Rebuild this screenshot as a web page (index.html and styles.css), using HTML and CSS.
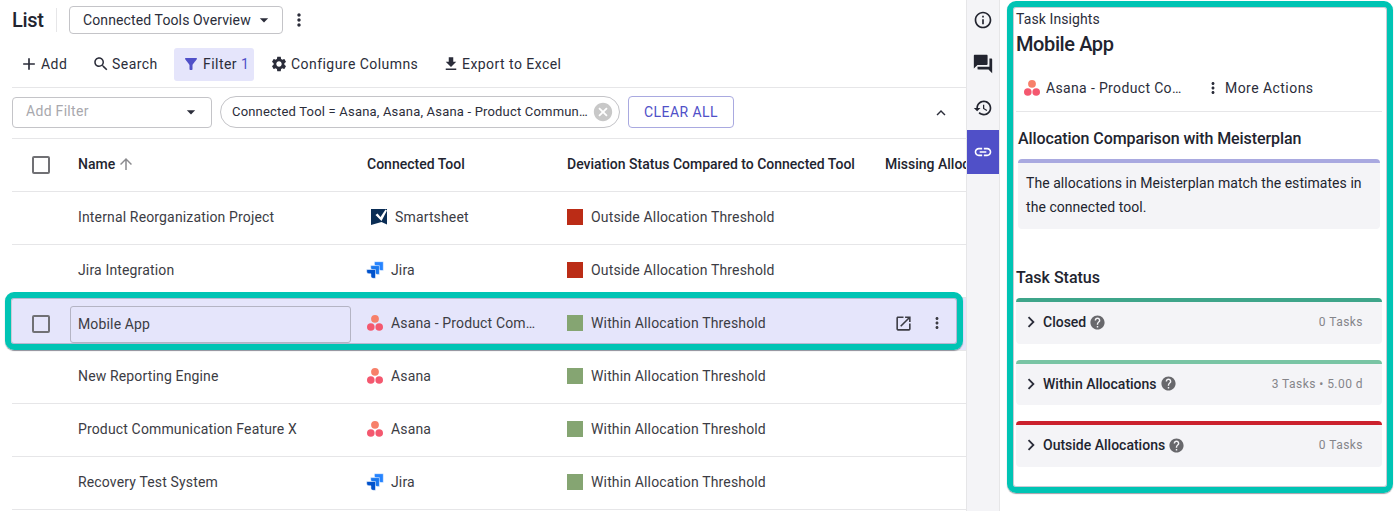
FILE: index.html
```html
<!DOCTYPE html>
<html lang="en">
<head>
<meta charset="utf-8">
<title>List</title>
<link rel="stylesheet" href="styles.css">
</head>
<body>
<svg class="sprite" xmlns="http://www.w3.org/2000/svg">
  <symbol id="i-more" viewBox="0 0 24 24"><path d="M12 8c1.100 0 2-.900 2-2s-.900-2-2-2-2 .900-2 2 .900 2 2 2zm0 2c-1.100 0-2 .900-2 2s.900 2 2 2 2-.900 2-2-.900-2-2-2zm0 6c-1.100 0-2 .900-2 2s.900 2 2 2 2-.900 2-2-.900-2-2-2z"/></symbol>
  <symbol id="i-drop" viewBox="0 0 24 24"><path d="M7 10l5 5 5-5z"/></symbol>
  <symbol id="i-chev" viewBox="0 0 24 24"><path d="M10 6L8.590 7.410 13.170 12l-4.580 4.590L10 18l6-6z"/></symbol>
  <symbol id="i-help" viewBox="0 0 24 24"><path d="M12 2C6.480 2 2 6.480 2 12s4.480 10 10 10 10-4.480 10-10S17.520 2 12 2zm1 17h-2v-2h2v2zm2.070-7.750l-.900.920C13.450 12.900 13 13.500 13 15h-2v-.500c0-1.100.450-2.100 1.170-2.830l1.240-1.260c.370-.360.590-.860.590-1.410 0-1.100-.900-2-2-2s-2 .900-2 2H8c0-2.210 1.790-4 4-4s4 1.790 4 4c0 .880-.360 1.680-.930 2.250z"/></symbol>
  <symbol id="i-asana" viewBox="0 0 18 18"><circle cx="9" cy="4.800" r="3.900" fill="#f7806a"/><circle cx="4.800" cy="13" r="3.800" fill="#f4586f"/><circle cx="13.200" cy="13" r="3.800" fill="#f4586f"/></symbol>
  <symbol id="i-jira" viewBox="0 0 18 18"><path d="M8.400 .7H17.300v8.800h-2.300c-1.200 0-2.300-1-2.300-2.300V5H10.700c-1.300 0-2.300-1-2.300-2.300z" fill="#2684ff" stroke="#fff" stroke-width=".5"/><path d="M4.700 4.600h8.700v8.800h-2.300c-1.200 0-2.300-1-2.300-2.300V8.900H7c-1.300 0-2.300-1-2.300-2.300z" fill="#1a78ef" stroke="#fff" stroke-width=".5"/><path d="M.7 8.500h8.800v8.800H7.200c-1.200 0-2.300-1-2.300-2.300v-2.200H3c-1.300 0-2.300-1-2.300-2.300z" fill="#0052cc" stroke="#fff" stroke-width=".5"/></symbol>
</svg>

<div class="app">
  <main class="main">
    <header class="title-bar">
      <h1 class="page-title">List</h1>
      <span class="title-sep"></span>
      <button class="view-select"><span>Connected Tools Overview</span><svg class="icon icon-20"><use href="#i-drop"/></svg></button>
      <svg class="icon icon-20 more-view"><use href="#i-more"/></svg>
    </header>

    <nav class="toolbar">
      <button class="tool tool-add"><svg class="icon icon-20" viewBox="0 0 24 24"><path d="M19 13h-6v6h-2v-6H5v-2h6V5h2v6h6v2z"/></svg>Add</button>
      <button class="tool tool-search"><svg class="icon icon-18" viewBox="0 0 24 24"><path d="M15.500 14h-.790l-.280-.270C15.410 12.590 16 11.110 16 9.500 16 5.910 13.090 3 9.500 3S3 5.910 3 9.500 5.910 16 9.500 16c1.610 0 3.090-.590 4.230-1.570l.270.280v.790l5 4.990L20.490 19l-4.990-5zm-6 0C7.010 14 5 11.990 5 9.500S7.010 5 9.500 5 14 7.010 14 9.500 11.990 14 9.500 14z"/></svg>Search</button>
      <button class="tool tool-filter"><svg class="icon icon-18 accent" viewBox="0 0 24 24"><path d="M4.250 5.610C6.270 8.200 10 13 10 13v6c0 .550.450 1 1 1h2c.550 0 1-.450 1-1v-6s3.720-4.800 5.740-7.390C20.250 4.950 19.780 4 18.950 4H5.040c-.830 0-1.300.950-.790 1.610z"/></svg><span>Filter <span class="count">1</span></span></button>
      <button class="tool tool-config"><svg class="icon icon-18" viewBox="0 0 24 24"><path d="M19.140 12.940c.040-.300.060-.610.060-.940 0-.320-.020-.640-.070-.940l2.030-1.580c.180-.140.230-.410.120-.610l-1.920-3.320c-.120-.220-.370-.290-.590-.220l-2.390.960c-.500-.380-1.030-.700-1.620-.940l-.360-2.540c-.040-.240-.240-.410-.480-.410h-3.840c-.240 0-.430.170-.470.410l-.360 2.540c-.590.240-1.130.570-1.620.940l-2.390-.960c-.220-.080-.470 0-.590.220L2.740 8.870c-.120.210-.080.470.120.610l2.030 1.580c-.050.300-.090.630-.090.940s.020.640.070.940l-2.030 1.580c-.180.140-.230.410-.120.610l1.920 3.320c.120.220.370.290.590.220l2.390-.960c.500.380 1.030.700 1.620.940l.360 2.540c.050.240.240.410.480.410h3.840c.240 0 .440-.170.470-.410l.360-2.540c.590-.240 1.130-.560 1.620-.940l2.390.960c.220.080.470 0 .590-.220l1.920-3.320c.120-.220.070-.470-.120-.610l-2.010-1.580zM12 15.600c-1.980 0-3.600-1.620-3.600-3.600s1.620-3.600 3.600-3.600 3.600 1.620 3.600 3.600-1.620 3.600-3.600 3.600z"/></svg>Configure Columns</button>
      <button class="tool tool-export"><svg class="icon icon-18" viewBox="0 0 24 24"><path d="M19 9h-4V3H9v6H5l7 7 7-7zM5 18v2h14v-2H5z"/></svg>Export to Excel</button>
    </nav>

    <section class="filter-bar">
      <div class="add-filter"><span>Add Filter</span><svg class="icon icon-20"><use href="#i-drop"/></svg></div>
      <div class="chip"><span class="chip-text">Connected Tool = Asana, Asana, Asana - Product Communication</span><svg class="icon chip-x" viewBox="0 0 24 24"><path d="M12 2C6.470 2 2 6.470 2 12s4.470 10 10 10 10-4.470 10-10S17.530 2 12 2zm5 13.590L15.590 17 12 13.410 8.410 17 7 15.590 10.590 12 7 8.410 8.410 7 12 10.590 15.590 7 17 8.410 13.410 12 17 15.590z"/></svg></div>
      <button class="clear-all">CLEAR ALL</button>
      <svg class="icon icon-18 collapse" viewBox="0 0 24 24"><path d="M12 8l-6 6 1.410 1.410L12 10.830l4.590 4.580L18 14z"/></svg>
    </section>

    <div class="table">
      <div class="row head">
        <div class="cell cell-check"><span class="checkbox"></span></div>
        <div class="cell cell-name">Name<svg class="icon icon-18 sort" viewBox="0 0 24 24"><path d="M4 12l1.410 1.410L11 7.830V20h2V7.830l5.580 5.590L20 12l-8-8-8 8z"/></svg></div>
        <div class="cell">Connected Tool</div>
        <div class="cell">Deviation Status Compared to Connected Tool</div>
        <div class="cell">Missing Allocations</div>
      </div>

      <div class="row">
        <div class="cell cell-check"></div>
        <div class="cell cell-name">Internal Reorganization Project</div>
        <div class="cell cell-tool"><svg class="logo logo-smart" viewBox="0 0 16 16"><path d="M0 0h16v15.500l-5.500-2.500L0 16z" fill="#0a2d55"/><path d="M4.500 6l2-1.500 3 3.500 5-7.500 1.500 1-5.500 10.500z" fill="#fff"/></svg>Smartsheet</div>
        <div class="cell cell-status"><span class="swatch bad"></span>Outside Allocation Threshold</div>
        <div class="cell"></div>
      </div>
      <div class="row">
        <div class="cell cell-check"></div>
        <div class="cell cell-name">Jira Integration</div>
        <div class="cell cell-tool tight"><svg class="logo"><use href="#i-jira"/></svg>Jira</div>
        <div class="cell cell-status"><span class="swatch bad"></span>Outside Allocation Threshold</div>
        <div class="cell"></div>
      </div>
      <div class="row selected">
        <div class="cell cell-check"><span class="checkbox"></span></div>
        <div class="cell cell-name"><span class="name-edit">Mobile App</span></div>
        <div class="cell cell-tool tight"><svg class="logo"><use href="#i-asana"/></svg><span class="clip">Asana - Product Communication</span></div>
        <div class="cell cell-status"><span class="swatch good"></span>Within Allocation Threshold</div>
        <div class="cell cell-actions">
          <svg class="icon icon-19" viewBox="0 0 24 24"><path d="M19 19H5V5h7V3H5c-1.110 0-2 .900-2 2v14c0 1.100.890 2 2 2h14c1.100 0 2-.900 2-2v-7h-2v7zM14 3v2h3.590l-9.830 9.830 1.410 1.410L19 6.410V10h2V3h-7z"/></svg>
          <svg class="icon icon-18"><use href="#i-more"/></svg>
        </div>
      </div>
      <div class="row">
        <div class="cell cell-check"></div>
        <div class="cell cell-name">New Reporting Engine</div>
        <div class="cell cell-tool tight"><svg class="logo"><use href="#i-asana"/></svg>Asana</div>
        <div class="cell cell-status"><span class="swatch good"></span>Within Allocation Threshold</div>
        <div class="cell"></div>
      </div>
      <div class="row">
        <div class="cell cell-check"></div>
        <div class="cell cell-name">Product Communication Feature X</div>
        <div class="cell cell-tool tight"><svg class="logo"><use href="#i-asana"/></svg>Asana</div>
        <div class="cell cell-status"><span class="swatch good"></span>Within Allocation Threshold</div>
        <div class="cell"></div>
      </div>
      <div class="row">
        <div class="cell cell-check"></div>
        <div class="cell cell-name">Recovery Test System</div>
        <div class="cell cell-tool tight"><svg class="logo"><use href="#i-jira"/></svg>Jira</div>
        <div class="cell cell-status"><span class="swatch good"></span>Within Allocation Threshold</div>
        <div class="cell"></div>
      </div>
    </div>
  </main>

  <aside class="rail">
    <button class="rail-item"><svg class="icon icon-20" viewBox="0 0 24 24"><path d="M11 7h2v2h-2zm0 4h2v6h-2zm1-9C6.480 2 2 6.480 2 12s4.480 10 10 10 10-4.480 10-10S17.520 2 12 2zm0 18c-4.410 0-8-3.590-8-8s3.590-8 8-8 8 3.590 8 8-3.590 8-8 8z"/></svg></button>
    <button class="rail-item"><svg class="icon icon-22" viewBox="0 0 24 24"><path d="M21 6h-2v9H6v2c0 .550.450 1 1 1h11l4 4V7c0-.550-.450-1-1-1zm-4 6V3c0-.550-.450-1-1-1H3c-.550 0-1 .450-1 1v14l4-4h10c.550 0 1-.450 1-1z"/></svg></button>
    <button class="rail-item"><svg class="icon icon-20" viewBox="0 0 24 24"><path d="M13 3c-4.970 0-9 4.030-9 9H1l3.890 3.890.070.140L9 12H6c0-3.870 3.130-7 7-7s7 3.130 7 7-3.130 7-7 7c-1.930 0-3.680-.790-4.940-2.060l-1.420 1.420C8.270 19.990 10.510 21 13 21c4.970 0 9-4.030 9-9s-4.030-9-9-9zm-1 5v5l4.280 2.540.720-1.210-3.500-2.080V8H12z"/></svg></button>
    <button class="rail-item active"><svg class="icon icon-20" viewBox="0 0 24 24"><path d="M3.900 12c0-1.710 1.390-3.100 3.100-3.100h4V7H7c-2.760 0-5 2.240-5 5s2.240 5 5 5h4v-1.900H7c-1.710 0-3.100-1.390-3.100-3.100zM8 13h8v-2H8v2zm9-6h-4v1.900h4c1.710 0 3.100 1.390 3.100 3.100s-1.390 3.100-3.100 3.100h-4V17h4c2.760 0 5-2.240 5-5s-2.240-5-5-5z"/></svg></button>
  </aside>

  <section class="insights">
    <div class="eyebrow">Task Insights</div>
    <h2 class="project">Mobile App</h2>
    <div class="actions">
      <span class="action action-tool"><svg class="logo"><use href="#i-asana"/></svg><span class="clip">Asana - Product Communication</span></span>
      <span class="action"><svg class="icon icon-18"><use href="#i-more"/></svg>More Actions</span>
    </div>
    <h3 class="compare-title">Allocation Comparison with Meisterplan</h3>
    <p class="compare-box">The allocations in Meisterplan match the estimates in the connected tool.</p>
    <h3 class="status-title">Task Status</h3>
    <div class="status-card closed">
      <svg class="icon chev"><use href="#i-chev"/></svg><span class="status-label">Closed</span><svg class="icon help"><use href="#i-help"/></svg><span class="status-meta">0 Tasks</span>
    </div>
    <div class="status-card within">
      <svg class="icon chev"><use href="#i-chev"/></svg><span class="status-label">Within Allocations</span><svg class="icon help"><use href="#i-help"/></svg><span class="status-meta">3 Tasks • 5.00 d</span>
    </div>
    <div class="status-card outside">
      <svg class="icon chev"><use href="#i-chev"/></svg><span class="status-label">Outside Allocations</span><svg class="icon help"><use href="#i-help"/></svg><span class="status-meta">0 Tasks</span>
    </div>
  </section>
</div>

<div class="mark mark-row"></div>
<div class="mark mark-panel"></div>
</body>
</html>
```

FILE: styles.css
```css
* { box-sizing: border-box; }
html, body { margin: 0; height: 511px; overflow: hidden; background: #fff; }
body { font-family: Roboto, "Liberation Sans", sans-serif; font-size: 14px; color: #2b2d3a; position: relative; }
button { font: inherit; color: inherit; background: none; border: 0; padding: 0; letter-spacing: inherit; }
h1, h2, h3, p { margin: 0; }
.sprite { display: none; }
.icon { display: block; flex: none; fill: currentColor; }
.icon-16 { width: 16px; height: 16px; }
.icon-18 { width: 18px; height: 18px; }
.icon-19 { width: 19px; height: 19px; }
.icon-20 { width: 20px; height: 20px; }
.icon-22 { width: 22px; height: 22px; }
.logo { display: block; flex: none; width: 18px; height: 18px; }

.app { display: flex; height: 511px; }
.main { width: 966px; flex: none; overflow: hidden; padding-left: 12px; }

.title-bar { display: flex; align-items: center; height: 40px; }
.page-title { font-size: 20px; font-weight: 500; line-height: 40px; width: 44px; letter-spacing: -.3px; color: #22242f; }
.title-sep { width: 1px; height: 24px; background: #e6e6e8; }
.view-select { display: flex; align-items: center; justify-content: space-between; width: 214px; height: 28px; margin-left: 12px; padding: 0 8px 1px 13px; border: 1px solid #c4c4c8; border-radius: 4px; letter-spacing: .12px; white-space: nowrap; }
.more-view { margin-left: 6px; }

.toolbar { display: flex; align-items: center; height: 33px; margin-top: 8px; letter-spacing: .45px; }
.tool { display: flex; align-items: center; height: 33px; padding-bottom: 1px; border-radius: 3px; white-space: nowrap; }
.tool-add { padding-left: 7px; gap: 2px; width: 69px; }
.tool-search { width: 93px; padding-left: 11px; gap: 2px; }
.tool-filter { width: 80px; padding-left: 8px; gap: 3px; background: #e5e5fb; }
.tool-filter .count { color: #5050c8; }
.accent { fill: #5050c8; }
.tool-config { margin-left: 16px; gap: 3px; width: 172px; }
.tool-export { gap: 2px; }

.filter-bar { display: flex; align-items: center; height: 52px; margin-top: 6px; padding-bottom: 2px; border-top: 1px solid #e6e6e8; border-bottom: 1px solid #e6e6e8; position: relative; }
.add-filter { display: flex; align-items: center; justify-content: space-between; width: 200px; height: 31px; padding: 0 10px 2px 13px; border: 1px solid #c4c4c8; border-radius: 4px; color: #a8a8ad; letter-spacing: .3px; }
.add-filter .icon { color: #2b2d3a; margin-top: 2px; }
.chip { display: flex; align-items: center; width: 400px; height: 32px; margin-left: 8px; padding: 0 5px 0 11px; border: 1px solid #c4c4c8; border-radius: 16px; font-size: 13px; letter-spacing: .19px; }
.chip-text { flex: 1; min-width: 0; padding-bottom: 2px; overflow: hidden; white-space: nowrap; text-overflow: ellipsis; }
.chip-x { width: 22px; height: 22px; fill: #c8c8c8; margin-left: 2px; }
.clear-all { width: 106px; height: 32px; margin-left: 8px; border: 1px solid #a9a9e0; border-radius: 4px; color: #5050c8; letter-spacing: .45px; }
.collapse { margin-left: auto; margin-right: 16px; margin-top: 2px; }

.row { display: grid; grid-template-columns: 58px 289px 200px 318px 1fr; height: 53px; border-bottom: 1px solid #e6e6e8; color: #3c3c44; letter-spacing: .15px; }
.row.head { color: #22242f; font-weight: 500; letter-spacing: 0; }
.cell { display: flex; align-items: center; padding-left: 8px; padding-bottom: 2px; white-space: nowrap; min-width: 0; }
.cell-check { padding-left: 20px; padding-bottom: 0; }
.checkbox { display: block; width: 18px; height: 18px; border: 2px solid #707074; border-radius: 2px; }
.sort { color: #8a8a8e; margin-left: 2px; }
.cell-tool { gap: 8px; padding-left: 12px; }
.cell-tool.tight { padding-left: 7px; gap: 7px; }
.logo-smart { width: 16px; height: 16px; }
.clip { overflow: hidden; text-overflow: ellipsis; white-space: nowrap; min-width: 0; }
.cell-tool .clip { width: 146px; }
.swatch { width: 16px; height: 16px; margin-right: 8px; flex: none; }
.swatch.bad { background: #bb2c16; }
.swatch.good { background: #85a572; }
.selected { background: #e5e5fb; }
.selected .cell-name { padding-bottom: 0; }
.name-edit { display: flex; align-items: center; width: 281px; height: 37px; margin-left: -8px; padding-left: 7px; border: 1px solid #b4b4c4; border-radius: 3px; }
.cell-actions { gap: 15px; padding-left: 17px; }

.rail { width: 34px; flex: none; margin-top: -2px; background: #f4f4f7; border-left: 1px solid #e6e6e8; border-right: 1px solid #e6e6e8; }
.rail-item { display: flex; align-items: center; justify-content: center; width: 100%; height: 44px; color: #22242f; }
.rail-item.active { background: #5050c8; color: #fff; }

.insights { flex: 1; min-width: 0; padding: 10px 14px 0 16px; }
.eyebrow { line-height: 18px; letter-spacing: .1px; }
.project { font-size: 20px; font-weight: 500; line-height: 24px; margin-top: 4px; letter-spacing: -.4px; color: #22242f; }
.actions { display: flex; align-items: center; height: 46px; margin-top: 10px; padding-bottom: 2px; border-bottom: 1px solid #e6e6e8; letter-spacing: .45px; }
.action { display: flex; align-items: center; gap: 3px; white-space: nowrap; }
.action-tool { width: 188px; gap: 5px; padding-left: 7px; letter-spacing: .35px; }
.action-tool .clip { width: 137px; }
.compare-title { font-size: 16px; font-weight: 500; line-height: 20px; margin: 17px 0 0 2px; letter-spacing: -.08px; color: #22242f; }
.compare-box { margin: 10px 2px 0 2px; height: 70px; padding: 8px 8px 0; background: #f4f4f7; border-top: 4px solid #a9a9e0; border-radius: 4px; line-height: 24px; letter-spacing: .05px; color: #22242f; }
.status-title { font-size: 16px; font-weight: 500; line-height: 20px; margin-top: 39px; color: #22242f; }
.status-card { display: flex; align-items: center; height: 46px; margin-top: 16px; padding: 0 19px 2px 4px; background: #f4f4f7; border-top: 4px solid; border-radius: 4px; }
.status-title + .status-card { margin-top: 10px; }
.status-card.closed { border-top-color: #3ea58a; }
.status-card.within { border-top-color: #79c4a4; height: 45px; }
.status-card.outside { border-top-color: #cb212d; }
.chev { width: 22px; height: 22px; }
.status-label { margin-left: 1px; font-weight: 500; color: #22242f; }
.help { width: 17px; height: 17px; margin-left: 3px; fill: #68686c; }
.status-meta { margin-left: auto; font-size: 12px; letter-spacing: .45px; color: #85858a; }

.mark { position: absolute; border: 6px solid #00c4b4; border-radius: 9px; box-shadow: 0 1px 1px rgba(40,40,60,.45), inset 0 0 0 1px rgba(70,70,100,.28); pointer-events: none; }
.mark-row { left: 5px; top: 292px; width: 958px; height: 58px; }
.mark-panel { left: 1007px; top: 1px; width: 386px; height: 492px; }
```
